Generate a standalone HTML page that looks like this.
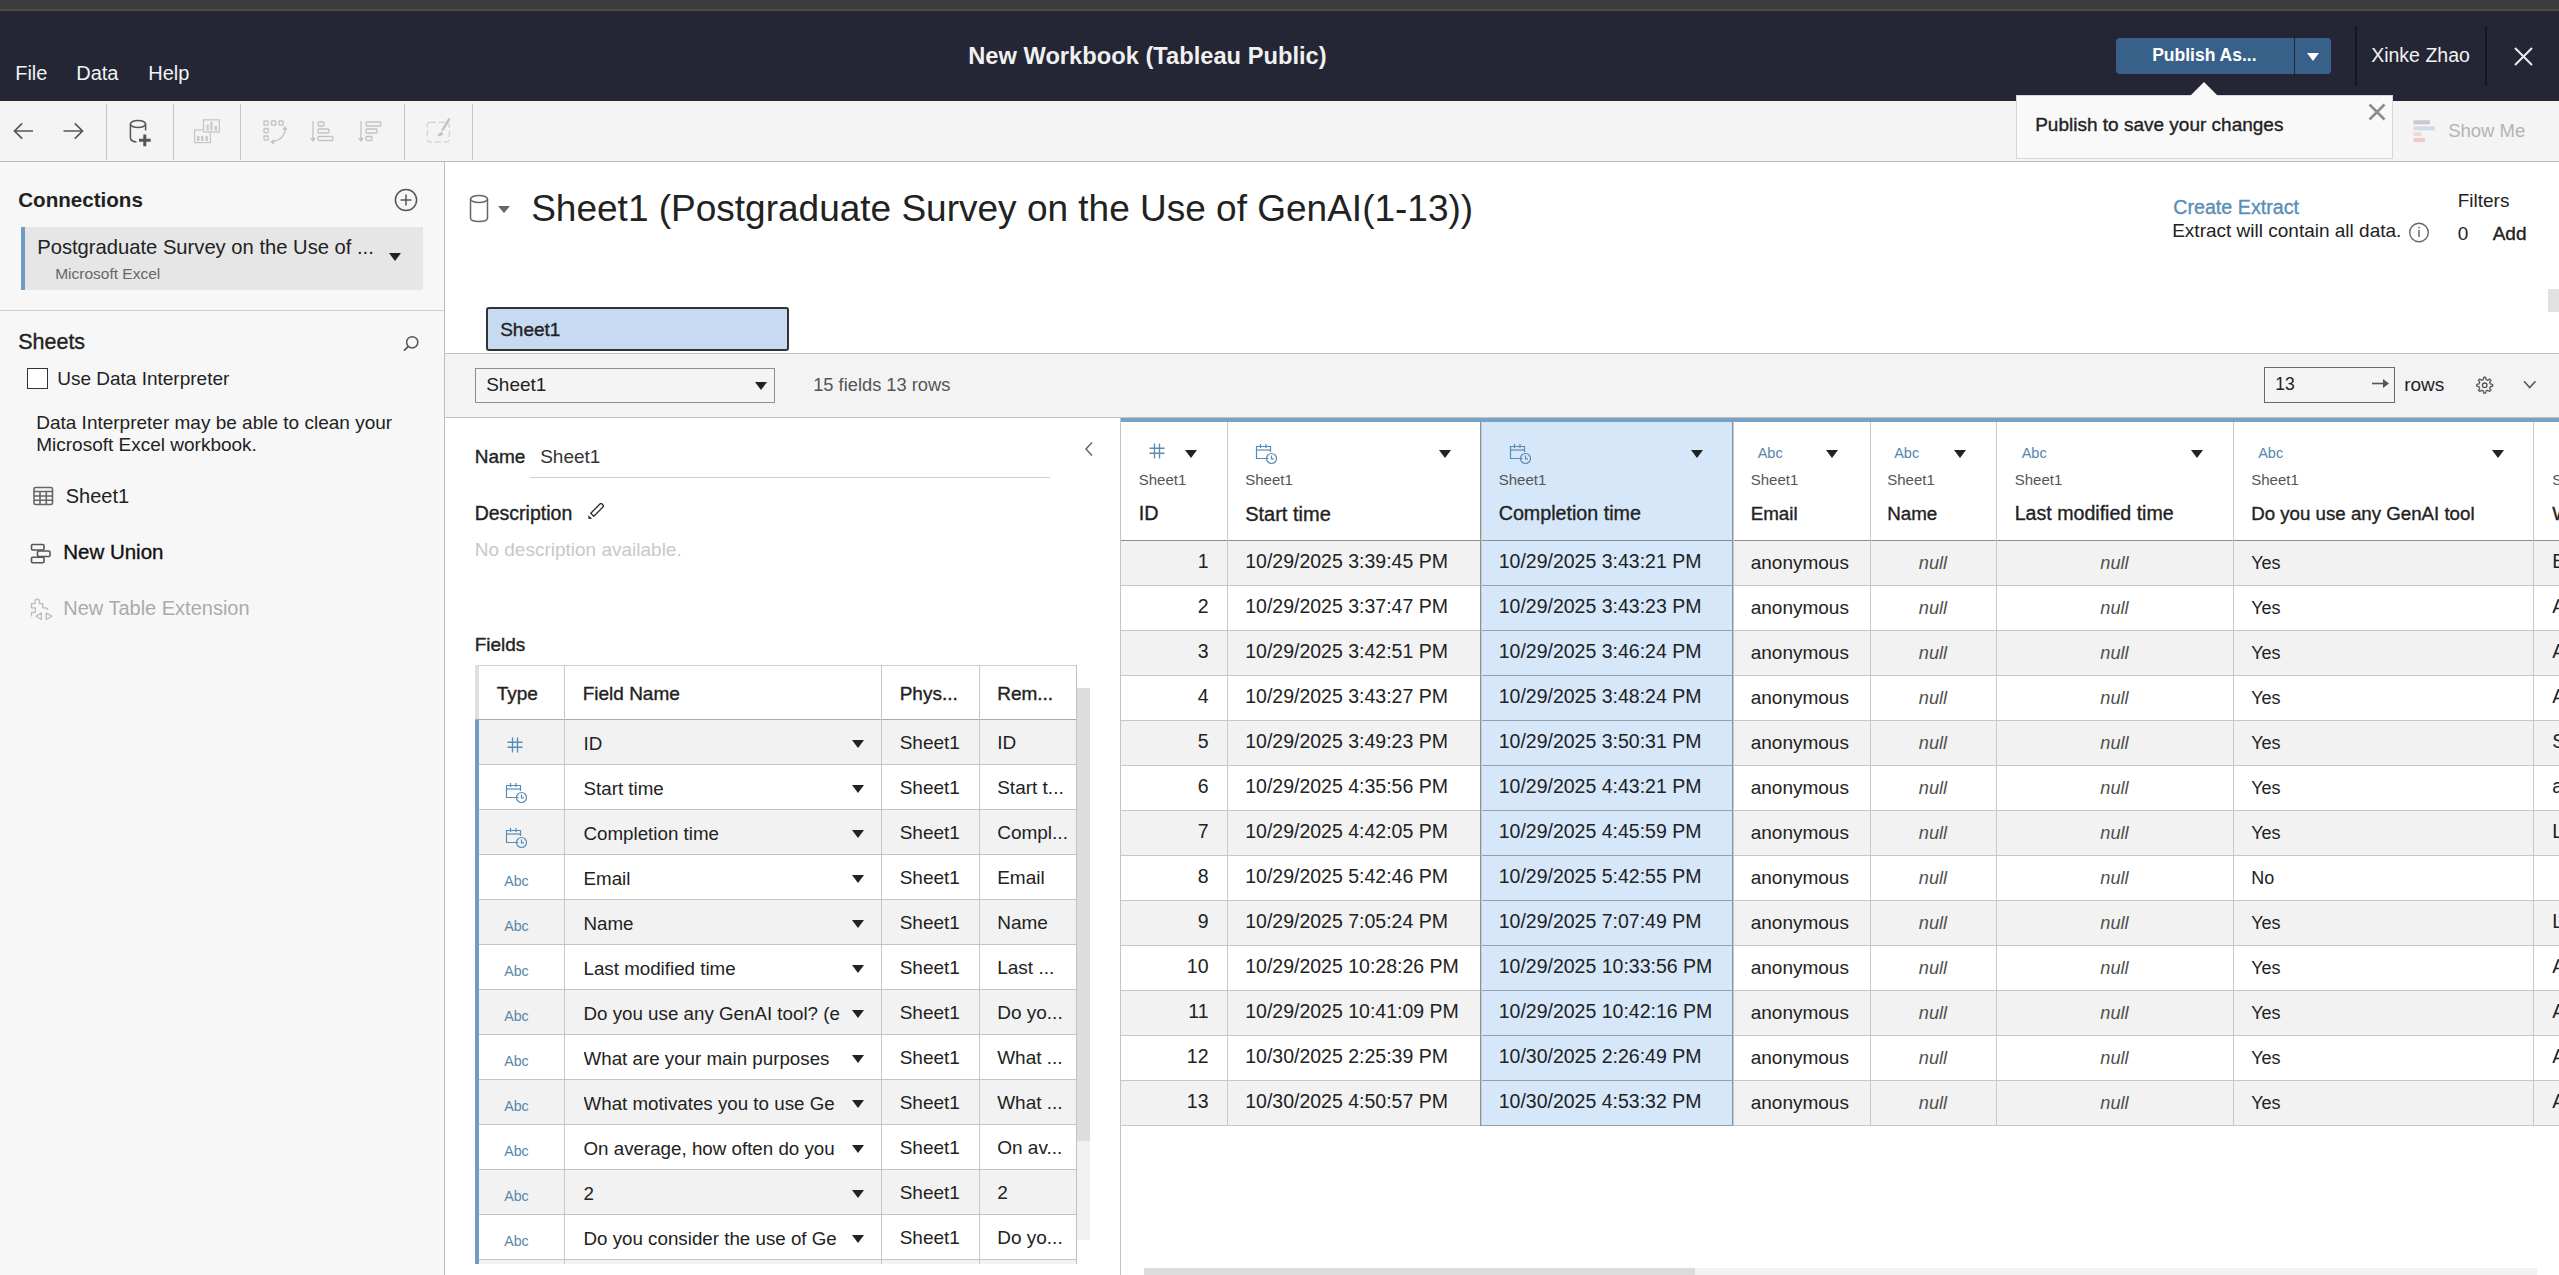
<!DOCTYPE html>
<html><head><meta charset="utf-8"><title>Tableau Public</title>
<style>
html,body{margin:0;padding:0;}
body{width:2559px;height:1275px;overflow:hidden;position:relative;background:#ffffff;font-family:"Liberation Sans", sans-serif;}
.t{position:absolute;white-space:nowrap;line-height:1;}
.r{position:absolute;}
.s{position:absolute;overflow:visible;}
</style></head><body>
<div class="r" style="left:0px;top:0px;width:2559px;height:11px;background:#3c3c3c;"></div>
<div class="r" style="left:0px;top:9px;width:2559px;height:2px;background:#4b4b4b;"></div>
<div class="r" style="left:0px;top:11px;width:2559px;height:90px;background:#242535;"></div>
<div class="t " style="left:15.2px;top:63.1px;font-size:20px;color:#f2f2f2;">File</div>
<div class="t " style="left:76.2px;top:63.1px;font-size:20px;color:#f2f2f2;">Data</div>
<div class="t " style="left:148.2px;top:63.1px;font-size:20px;color:#f2f2f2;">Help</div>
<div class="t " style="left:968.2px;top:44.9px;font-size:23.7px;color:#f0f0f0;font-weight:700;">New Workbook (Tableau Public)</div>
<div class="r" style="left:2116px;top:38px;width:215px;height:36px;background:#386189;border-radius:4px;"></div>
<div class="r" style="left:2294px;top:36px;width:1px;height:40px;background:#1c2838;"></div>
<div class="t " style="left:2152.2px;top:47.2px;font-size:17.5px;color:#ffffff;font-weight:700;">Publish As...</div>
<svg class="s" style="left:2307px;top:53px;" width="12" height="8" viewBox="0 0 12 8"><path d="M0 0H12L6.0 8Z" fill="#ffffff"/></svg>
<div class="r" style="left:2355px;top:26px;width:2px;height:60px;background:#15161e;"></div>
<div class="r" style="left:2485px;top:26px;width:2px;height:60px;background:#15161e;"></div>
<div class="t " style="left:2371.2px;top:46.2px;font-size:19.5px;color:#f2f2f2;">Xinke Zhao</div>
<svg class="s" style="left:2513px;top:46px;" width="21" height="21" viewBox="0 0 21 21"><path d="M2 2L19 19M19 2L2 19" stroke="#eeeeee" stroke-width="2"/></svg>
<div class="r" style="left:0px;top:101px;width:2559px;height:60px;background:#f4f4f4;"></div>
<div class="r" style="left:0px;top:161px;width:2559px;height:1px;background:#bababa;"></div>
<div class="r" style="left:106px;top:104px;width:1px;height:56px;background:#c6c6c6;"></div>
<div class="r" style="left:173px;top:104px;width:1px;height:56px;background:#c6c6c6;"></div>
<div class="r" style="left:240px;top:104px;width:1px;height:56px;background:#c6c6c6;"></div>
<div class="r" style="left:404px;top:104px;width:1px;height:56px;background:#c6c6c6;"></div>
<div class="r" style="left:472px;top:104px;width:1px;height:56px;background:#c6c6c6;"></div>
<svg class="s" style="left:12px;top:121px;" width="24" height="20" viewBox="0 0 24 20"><path d="M21 10H2.5M10.2 2.3L2.5 10L10.2 17.7" stroke="#555" stroke-width="1.7" fill="none"/></svg>
<svg class="s" style="left:61px;top:121px;" width="24" height="20" viewBox="0 0 24 20"><path d="M2.5 10H21M13.8 2.3L21.5 10L13.8 17.7" stroke="#555" stroke-width="1.7" fill="none"/></svg>
<svg class="s" style="left:128px;top:118px;" width="26" height="30" viewBox="0 0 26 30"><ellipse cx="10" cy="6" rx="7.6" ry="3.6" stroke="#555" stroke-width="1.5" fill="none"/><path d="M2.4 6V19.5Q2.4 23.5 8.5 24M17.6 6V12.5" stroke="#555" stroke-width="1.5" fill="none"/><path d="M16.8 16.5V28.2M11 22.3H22.7" stroke="#555" stroke-width="3"/></svg>
<svg class="s" style="left:190px;top:115px;" width="34" height="32" viewBox="0 0 34 32"><g stroke="#c6c6c6" stroke-width="1.3" fill="none"><rect x="13.5" y="4.8" width="15.8" height="12.2"/><path d="M12.9 14.9H4.6V27.7H20.4V17.6"/></g><g fill="#c9c9c9"><rect x="16.5" y="9.5" width="2.3" height="6"/><rect x="20.4" y="6.5" width="2.1" height="9"/><rect x="24.5" y="11" width="2.5" height="4.6"/><rect x="7" y="21" width="2.5" height="5"/><rect x="11" y="21" width="2.5" height="5"/><rect x="15.5" y="21" width="2.5" height="5"/></g></svg>
<svg class="s" style="left:261px;top:118px;" width="30" height="28" viewBox="0 0 30 28"><g stroke="#c2c2c2" stroke-width="1.3" fill="none"><rect x="3" y="3" width="4.2" height="4.2" rx="0.8"/><rect x="10.5" y="3" width="4.2" height="4.2" rx="0.8"/><rect x="18" y="3" width="4.2" height="4.2" rx="0.8"/><rect x="3" y="10.5" width="4.2" height="4.2" rx="0.8"/><rect x="3" y="18" width="4.2" height="4.2" rx="0.8"/><path d="M24 11Q24 21 11 24"/></g><path d="M21.5 12L24 8L26.5 12ZM13 21.5L9 24L13 26.5Z" fill="#c2c2c2"/></svg>
<svg class="s" style="left:308px;top:119px;" width="30" height="26" viewBox="0 0 30 26"><g stroke="#c2c2c2" stroke-width="1.3" fill="none"><path d="M5 2V22"/><rect x="10" y="3" width="6" height="4" rx="1"/><rect x="10" y="10" width="11" height="4" rx="1"/><rect x="10" y="17.5" width="15" height="4" rx="1"/></g><path d="M2 19L5 23L8 19Z" fill="#c2c2c2"/></svg>
<svg class="s" style="left:356px;top:119px;" width="30" height="26" viewBox="0 0 30 26"><g stroke="#c2c2c2" stroke-width="1.3" fill="none"><path d="M5 2V22"/><rect x="10" y="3" width="15" height="4" rx="1"/><rect x="10" y="10" width="11" height="4" rx="1"/><rect x="10" y="17.5" width="6" height="4" rx="1"/></g><path d="M2 19L5 23L8 19Z" fill="#c2c2c2"/></svg>
<svg class="s" style="left:423px;top:115px;" width="30" height="30" viewBox="0 0 30 30"><rect x="4.3" y="7.3" width="22" height="19.5" rx="2.5" stroke="#d2d2d2" stroke-width="1.3" stroke-dasharray="6 3" fill="none"/><path d="M26 4.3L19.6 14.8" stroke="#c2c2c2" stroke-width="2.4" stroke-linecap="round"/><path d="M14.3 20.9Q15.6 17.6 18.8 16.8L20.3 18.4Q19.4 21.3 14.3 20.9Z" fill="#c2c2c2"/></svg>
<div class="r" style="left:2016px;top:95px;width:377px;height:64px;background:#f9f9f9;border:1px solid #d6d6d6;box-sizing:border-box;"></div>
<svg class="s" style="left:2189px;top:81px;" width="30" height="16" viewBox="0 0 30 16"><path d="M1 15L15 1L29 15" fill="#f9f9f9"/></svg>
<div class="t " style="left:2035.2px;top:114.6px;font-size:19px;color:#222;-webkit-text-stroke:0.35px #222;">Publish to save your changes</div>
<svg class="s" style="left:2367px;top:102px;" width="20" height="20" viewBox="0 0 20 20"><path d="M2.5 2.5L17.5 17.5M17.5 2.5L2.5 17.5" stroke="#8c8c8c" stroke-width="2.6"/></svg>
<svg class="s" style="left:2411px;top:118px;" width="26" height="26" viewBox="0 0 26 26"><rect x="2.5" y="2.3" width="16.5" height="4" fill="#ccc6d4"/><rect x="2.5" y="8.3" width="21.5" height="4" fill="#d0dbe6"/><rect x="2.5" y="14.2" width="7.8" height="4" fill="#efdbc6"/><rect x="2.5" y="20" width="11.5" height="4" fill="#eecacd"/></svg>
<div class="t " style="left:2448.2px;top:122.3px;font-size:18.5px;color:#b3b3b3;">Show Me</div>
<div class="r" style="left:0px;top:162px;width:444px;height:1113px;background:#f7f7f7;"></div>
<div class="r" style="left:444px;top:162px;width:1px;height:1113px;background:#bcbcbc;"></div>
<div class="t " style="left:18.2px;top:189.6px;font-size:20.6px;color:#222;font-weight:700;">Connections</div>
<svg class="s" style="left:394px;top:188px;" width="24" height="24" viewBox="0 0 24 24"><circle cx="12" cy="12" r="10.6" stroke="#555" stroke-width="1.5" fill="none"/><path d="M12 6.5V17.5M6.5 12H17.5" stroke="#555" stroke-width="1.5"/></svg>
<div class="r" style="left:21px;top:227px;width:402px;height:63px;background:#e6e6e6;"></div>
<div class="r" style="left:21px;top:227px;width:4px;height:63px;background:#6e9cc4;"></div>
<div class="t " style="left:37.2px;top:236.9px;font-size:20.2px;color:#222;">Postgraduate Survey on the Use of ...</div>
<svg class="s" style="left:389px;top:253px;" width="12" height="8" viewBox="0 0 12 8"><path d="M0 0H12L6.0 8Z" fill="#222"/></svg>
<div class="t " style="left:55.2px;top:266.4px;font-size:15.5px;color:#666;">Microsoft Excel</div>
<div class="r" style="left:0px;top:310px;width:444px;height:1px;background:#cfcfcf;"></div>
<div class="t " style="left:18.2px;top:331.8px;font-size:21.5px;color:#222;-webkit-text-stroke:0.35px #222;">Sheets</div>
<svg class="s" style="left:400px;top:333px;" width="22" height="22" viewBox="0 0 22 22"><circle cx="12.2" cy="9.3" r="5.6" stroke="#555" stroke-width="1.5" fill="none"/><path d="M8.3 13.3L4 17.6" stroke="#555" stroke-width="1.8"/></svg>
<div class="r" style="left:27px;top:368px;width:21px;height:21px;background:#ffffff;border:1.5px solid #333;box-sizing:border-box;"></div>
<div class="t " style="left:57.2px;top:369.2px;font-size:19px;color:#222;">Use Data Interpreter</div>
<div class="t " style="left:36.2px;top:413.2px;font-size:19px;color:#222;">Data Interpreter may be able to clean your</div>
<div class="t " style="left:36.2px;top:435.2px;font-size:19px;color:#222;">Microsoft Excel workbook.</div>
<svg class="s" style="left:32px;top:485px;" width="22" height="22" viewBox="0 0 22 22"><rect x="2" y="2.5" width="18.5" height="17" rx="1.5" stroke="#666" stroke-width="1.6" fill="none"/><path d="M2 6.5H20.5M2 11H20.5M2 15.3H20.5M8 6.5V19.5M14.3 6.5V19.5" stroke="#666" stroke-width="1.6"/></svg>
<div class="t " style="left:65.7px;top:485.8px;font-size:20px;color:#222;">Sheet1</div>
<svg class="s" style="left:29px;top:542px;" width="24" height="23" viewBox="0 0 24 23"><g stroke="#555" stroke-width="1.6" fill="none"><rect x="2.5" y="2.5" width="12.5" height="5.5" rx="1.2"/><rect x="8.5" y="9" width="12.5" height="5.5" rx="1.2"/><rect x="2.5" y="15.2" width="12.5" height="5.5" rx="1.2"/></g></svg>
<div class="t " style="left:63.2px;top:541.8px;font-size:20.5px;color:#111;-webkit-text-stroke:0.35px #111;">New Union</div>
<svg class="s" style="left:29px;top:597px;" width="26" height="26" viewBox="0 0 26 26"><g stroke="#bcbcbc" stroke-width="1.3" fill="none" stroke-linejoin="round"><path d="M2.5 19.5V15.3H6.3V10.8H2.5V6.6H6V4.3Q6 2.2 8.2 2.2Q10.4 2.2 10.4 4.3V6.6H13.7V10.8H16Q18.6 10.8 18.6 13"/><path d="M12.4 16V22.5L7 19.2Z"/><path d="M17.2 16V22.5L22.8 19.2Z"/></g></svg>
<div class="t " style="left:63.2px;top:598.3px;font-size:20px;color:#aaaaaa;">New Table Extension</div>
<svg class="s" style="left:468px;top:193px;" width="24" height="32" viewBox="0 0 24 32"><ellipse cx="11" cy="6" rx="8.5" ry="3.6" stroke="#666" stroke-width="1.5" fill="none"/><path d="M2.5 6V25Q2.5 28.5 11 28.5Q19.5 28.5 19.5 25V6" stroke="#666" stroke-width="1.5" fill="none"/></svg>
<svg class="s" style="left:498px;top:206px;" width="12" height="7" viewBox="0 0 12 7"><path d="M0 0H12L6.0 7Z" fill="#666"/></svg>
<div class="t " style="left:531.2px;top:189.7px;font-size:37px;color:#222;">Sheet1 (Postgraduate Survey on the Use of GenAI(1-13))</div>
<div class="t " style="left:2173.2px;top:197.7px;font-size:19.7px;color:#5a8db5;-webkit-text-stroke:0.35px #5a8db5;">Create Extract</div>
<div class="t " style="left:2172.2px;top:221.4px;font-size:19px;color:#222;">Extract will contain all data.</div>
<svg class="s" style="left:2408px;top:221px;" width="22" height="22" viewBox="0 0 22 22"><circle cx="11" cy="11.5" r="9.3" stroke="#666" stroke-width="1.4" fill="none"/><path d="M11 9V16" stroke="#666" stroke-width="1.5"/><circle cx="11" cy="6.6" r="0.9" fill="#666"/></svg>
<div class="t " style="left:2457.7px;top:191.1px;font-size:19px;color:#222;">Filters</div>
<div class="t " style="left:2457.7px;top:224.3px;font-size:19px;color:#222;">0</div>
<div class="t " style="left:2492.7px;top:224.3px;font-size:19px;color:#222;-webkit-text-stroke:0.35px #222;">Add</div>
<div class="r" style="left:2548px;top:289px;width:11px;height:23px;background:#e2e2e2;"></div>
<div class="r" style="left:486px;top:307px;width:303px;height:44px;background:#c6dbf1;border:2px solid #333;border-radius:3px;box-sizing:border-box;"></div>
<div class="t " style="left:500.2px;top:319.9px;font-size:19px;color:#222;-webkit-text-stroke:0.35px #222;">Sheet1</div>
<div class="r" style="left:445px;top:353px;width:2114px;height:1px;background:#c3c3c3;"></div>
<div class="r" style="left:445px;top:354px;width:2114px;height:63px;background:#f3f3f3;"></div>
<div class="r" style="left:445px;top:417px;width:2114px;height:1px;background:#c3c3c3;"></div>
<div class="r" style="left:475px;top:368px;width:300px;height:35px;background:#f4f4f4;border:1px solid #8f8f8f;box-sizing:border-box;"></div>
<div class="t " style="left:486.2px;top:375.2px;font-size:19px;color:#222;">Sheet1</div>
<svg class="s" style="left:755px;top:382px;" width="12" height="8" viewBox="0 0 12 8"><path d="M0 0H12L6.0 8Z" fill="#222"/></svg>
<div class="t " style="left:813.2px;top:375.8px;font-size:18.3px;color:#555;">15 fields 13 rows</div>
<div class="r" style="left:2264px;top:367px;width:131px;height:36px;background:#f4f4f4;border:1.5px solid #6a6a6a;box-sizing:border-box;"></div>
<div class="t " style="left:2275.2px;top:376.0px;font-size:17.5px;color:#222;">13</div>
<svg class="s" style="left:2371px;top:376px;" width="20" height="14" viewBox="0 0 20 14"><path d="M1 7.5H16" stroke="#555" stroke-width="1.6"/><path d="M12 3L18 7.5L12 12Z" fill="#555"/></svg>
<div class="t " style="left:2404.2px;top:374.7px;font-size:19px;color:#222;">rows</div>
<svg class="s" style="left:2473px;top:374px;" width="22" height="22" viewBox="0 0 22 22"><path d="M11 3.2L12.6 3.4L13.1 5.6L14.7 6.3L16.6 5.1L17.9 6.4L16.7 8.3L17.4 9.9L19.6 10.4V12.2L17.4 12.7L16.7 14.3L17.9 16.2L16.6 17.5L14.7 16.3L13.1 17L12.6 19.2H10.8L10.3 17L8.7 16.3L6.8 17.5L5.5 16.2L6.7 14.3L6 12.7L3.8 12.2V10.4L6 9.9L6.7 8.3L5.5 6.4L6.8 5.1L8.7 6.3L10.3 5.6L10.8 3.4Z" stroke="#555" stroke-width="1.3" fill="none"/><circle cx="11.7" cy="11.3" r="2.3" stroke="#555" stroke-width="1.3" fill="none"/></svg>
<svg class="s" style="left:2521px;top:378px;" width="18" height="14" viewBox="0 0 18 14"><path d="M3 3.3L8.7 9.6L14.5 3.3" stroke="#555" stroke-width="1.5" fill="none"/></svg>
<div class="t " style="left:474.7px;top:447.4px;font-size:19px;color:#222;-webkit-text-stroke:0.35px #222;">Name</div>
<div class="t " style="left:540.2px;top:447.4px;font-size:19px;color:#333;">Sheet1</div>
<div class="r" style="left:530px;top:477px;width:520px;height:1px;background:#cfcfcf;"></div>
<svg class="s" style="left:1082px;top:440px;" width="14" height="18" viewBox="0 0 14 18"><path d="M10 2.5L4 9L10 15.5" stroke="#666" stroke-width="1.5" fill="none"/></svg>
<div class="t " style="left:474.7px;top:504.3px;font-size:19.5px;color:#222;-webkit-text-stroke:0.35px #222;">Description</div>
<svg class="s" style="left:585px;top:501px;" width="22" height="20" viewBox="0 0 22 20"><path d="M5.8 12.2L15.2 2.8Q16 2.2 16.8 2.8L18.2 4.2Q18.8 5 18.2 5.8L8.8 15.2Z" stroke="#2a2a2a" stroke-width="1.3" fill="none" stroke-linejoin="round"/><path d="M3.3 14.3L3.5 18L7.2 17.7Z" fill="#2a2a2a"/></svg>
<div class="t " style="left:474.7px;top:539.9px;font-size:19px;color:#c8c8c8;">No description available.</div>
<div class="t " style="left:474.7px;top:635.1px;font-size:19px;color:#222;-webkit-text-stroke:0.35px #222;">Fields</div>
<div class="r" style="left:475px;top:665px;width:602px;height:54px;background:#ffffff;"></div>
<div class="r" style="left:475px;top:665px;width:602px;height:1px;background:#d0d0d0;"></div>
<div class="r" style="left:475px;top:665px;width:4px;height:54px;background:#e0e0e0;"></div>
<div class="r" style="left:475px;top:719px;width:602px;height:1px;background:#a9a9a9;"></div>
<div class="t " style="left:496.7px;top:684.4px;font-size:19px;color:#222;-webkit-text-stroke:0.35px #222;">Type</div>
<div class="t " style="left:582.7px;top:684.4px;font-size:19px;color:#222;-webkit-text-stroke:0.35px #222;">Field Name</div>
<div class="t " style="left:899.7px;top:684.4px;font-size:19px;color:#222;-webkit-text-stroke:0.35px #222;">Phys...</div>
<div class="t " style="left:997.2px;top:684.4px;font-size:19px;color:#222;-webkit-text-stroke:0.35px #222;">Rem...</div>
<div class="r" style="left:475px;top:720px;width:602px;height:44px;background:#f2f2f2;"></div>
<div class="r" style="left:475px;top:720px;width:4px;height:45px;background:#6e9cc4;"></div>
<div class="r" style="left:479px;top:764px;width:598px;height:1px;background:#c4c4c4;"></div>
<svg class="s" style="left:506px;top:735.5px;" width="18" height="18" viewBox="0 0 18 18"><path d="M6.5 1.5V16.5M11.5 1.5V16.5M1.5 6.2H16.5M1.5 11.2H16.5" stroke="#5a8cb3" stroke-width="1.35"/></svg>
<div class="t" style="left:583.5px;top:735.0px;font-size:18.75px;color:#222;width:256px;overflow:hidden">ID</div>
<svg class="s" style="left:852px;top:740px;" width="12" height="8" viewBox="0 0 12 8"><path d="M0 0H12L6.0 8Z" fill="#222"/></svg>
<div class="t " style="left:899.7px;top:732.9px;font-size:19px;color:#222;">Sheet1</div>
<div class="t " style="left:997.2px;top:732.9px;font-size:19px;color:#222;">ID</div>
<div class="r" style="left:475px;top:765px;width:602px;height:44px;background:#ffffff;"></div>
<div class="r" style="left:475px;top:765px;width:4px;height:45px;background:#6e9cc4;"></div>
<div class="r" style="left:479px;top:809px;width:598px;height:1px;background:#c4c4c4;"></div>
<svg class="s" style="left:505px;top:782px;" width="24" height="22" viewBox="0 0 24 22"><g stroke="#5a8cb3" stroke-width="1.2" fill="none"><path d="M13.5 15.5H1.5V3.5H15.5V9"/><path d="M1.5 7H15.5"/><path d="M5.5 1V5M11 1V5"/><circle cx="16.5" cy="15.5" r="5"/><path d="M16.5 12.5V15.8H19"/></g></svg>
<div class="t" style="left:583.5px;top:780.0px;font-size:18.75px;color:#222;width:256px;overflow:hidden">Start time</div>
<svg class="s" style="left:852px;top:785px;" width="12" height="8" viewBox="0 0 12 8"><path d="M0 0H12L6.0 8Z" fill="#222"/></svg>
<div class="t " style="left:899.7px;top:777.9px;font-size:19px;color:#222;">Sheet1</div>
<div class="t " style="left:997.2px;top:777.9px;font-size:19px;color:#222;">Start t...</div>
<div class="r" style="left:475px;top:810px;width:602px;height:44px;background:#f2f2f2;"></div>
<div class="r" style="left:475px;top:810px;width:4px;height:45px;background:#6e9cc4;"></div>
<div class="r" style="left:479px;top:854px;width:598px;height:1px;background:#c4c4c4;"></div>
<svg class="s" style="left:505px;top:827px;" width="24" height="22" viewBox="0 0 24 22"><g stroke="#5a8cb3" stroke-width="1.2" fill="none"><path d="M13.5 15.5H1.5V3.5H15.5V9"/><path d="M1.5 7H15.5"/><path d="M5.5 1V5M11 1V5"/><circle cx="16.5" cy="15.5" r="5"/><path d="M16.5 12.5V15.8H19"/></g></svg>
<div class="t" style="left:583.5px;top:825.0px;font-size:18.75px;color:#222;width:256px;overflow:hidden">Completion time</div>
<svg class="s" style="left:852px;top:830px;" width="12" height="8" viewBox="0 0 12 8"><path d="M0 0H12L6.0 8Z" fill="#222"/></svg>
<div class="t " style="left:899.7px;top:822.9px;font-size:19px;color:#222;">Sheet1</div>
<div class="t " style="left:997.2px;top:822.9px;font-size:19px;color:#222;">Compl...</div>
<div class="r" style="left:475px;top:855px;width:602px;height:44px;background:#ffffff;"></div>
<div class="r" style="left:475px;top:855px;width:4px;height:45px;background:#6e9cc4;"></div>
<div class="r" style="left:479px;top:899px;width:598px;height:1px;background:#c4c4c4;"></div>
<div class="t " style="left:504.2px;top:874.0px;font-size:14.2px;color:#5586ab;">Abc</div>
<div class="t" style="left:583.5px;top:870.0px;font-size:18.75px;color:#222;width:256px;overflow:hidden">Email</div>
<svg class="s" style="left:852px;top:875px;" width="12" height="8" viewBox="0 0 12 8"><path d="M0 0H12L6.0 8Z" fill="#222"/></svg>
<div class="t " style="left:899.7px;top:867.9px;font-size:19px;color:#222;">Sheet1</div>
<div class="t " style="left:997.2px;top:867.9px;font-size:19px;color:#222;">Email</div>
<div class="r" style="left:475px;top:900px;width:602px;height:44px;background:#f2f2f2;"></div>
<div class="r" style="left:475px;top:900px;width:4px;height:45px;background:#6e9cc4;"></div>
<div class="r" style="left:479px;top:944px;width:598px;height:1px;background:#c4c4c4;"></div>
<div class="t " style="left:504.2px;top:919.0px;font-size:14.2px;color:#5586ab;">Abc</div>
<div class="t" style="left:583.5px;top:915.0px;font-size:18.75px;color:#222;width:256px;overflow:hidden">Name</div>
<svg class="s" style="left:852px;top:920px;" width="12" height="8" viewBox="0 0 12 8"><path d="M0 0H12L6.0 8Z" fill="#222"/></svg>
<div class="t " style="left:899.7px;top:912.9px;font-size:19px;color:#222;">Sheet1</div>
<div class="t " style="left:997.2px;top:912.9px;font-size:19px;color:#222;">Name</div>
<div class="r" style="left:475px;top:945px;width:602px;height:44px;background:#ffffff;"></div>
<div class="r" style="left:475px;top:945px;width:4px;height:45px;background:#6e9cc4;"></div>
<div class="r" style="left:479px;top:989px;width:598px;height:1px;background:#c4c4c4;"></div>
<div class="t " style="left:504.2px;top:964.0px;font-size:14.2px;color:#5586ab;">Abc</div>
<div class="t" style="left:583.5px;top:960.0px;font-size:18.75px;color:#222;width:256px;overflow:hidden">Last modified time</div>
<svg class="s" style="left:852px;top:965px;" width="12" height="8" viewBox="0 0 12 8"><path d="M0 0H12L6.0 8Z" fill="#222"/></svg>
<div class="t " style="left:899.7px;top:957.9px;font-size:19px;color:#222;">Sheet1</div>
<div class="t " style="left:997.2px;top:957.9px;font-size:19px;color:#222;">Last ...</div>
<div class="r" style="left:475px;top:990px;width:602px;height:44px;background:#f2f2f2;"></div>
<div class="r" style="left:475px;top:990px;width:4px;height:45px;background:#6e9cc4;"></div>
<div class="r" style="left:479px;top:1034px;width:598px;height:1px;background:#c4c4c4;"></div>
<div class="t " style="left:504.2px;top:1009.0px;font-size:14.2px;color:#5586ab;">Abc</div>
<div class="t" style="left:583.5px;top:1005.0px;font-size:18.75px;color:#222;width:256px;overflow:hidden">Do you use any GenAI tool? (e</div>
<svg class="s" style="left:852px;top:1010px;" width="12" height="8" viewBox="0 0 12 8"><path d="M0 0H12L6.0 8Z" fill="#222"/></svg>
<div class="t " style="left:899.7px;top:1002.9px;font-size:19px;color:#222;">Sheet1</div>
<div class="t " style="left:997.2px;top:1002.9px;font-size:19px;color:#222;">Do yo...</div>
<div class="r" style="left:475px;top:1035px;width:602px;height:44px;background:#ffffff;"></div>
<div class="r" style="left:475px;top:1035px;width:4px;height:45px;background:#6e9cc4;"></div>
<div class="r" style="left:479px;top:1079px;width:598px;height:1px;background:#c4c4c4;"></div>
<div class="t " style="left:504.2px;top:1054.0px;font-size:14.2px;color:#5586ab;">Abc</div>
<div class="t" style="left:583.5px;top:1050.0px;font-size:18.75px;color:#222;width:256px;overflow:hidden">What are your main purposes</div>
<svg class="s" style="left:852px;top:1055px;" width="12" height="8" viewBox="0 0 12 8"><path d="M0 0H12L6.0 8Z" fill="#222"/></svg>
<div class="t " style="left:899.7px;top:1047.9px;font-size:19px;color:#222;">Sheet1</div>
<div class="t " style="left:997.2px;top:1047.9px;font-size:19px;color:#222;">What ...</div>
<div class="r" style="left:475px;top:1080px;width:602px;height:44px;background:#f2f2f2;"></div>
<div class="r" style="left:475px;top:1080px;width:4px;height:45px;background:#6e9cc4;"></div>
<div class="r" style="left:479px;top:1124px;width:598px;height:1px;background:#c4c4c4;"></div>
<div class="t " style="left:504.2px;top:1099.0px;font-size:14.2px;color:#5586ab;">Abc</div>
<div class="t" style="left:583.5px;top:1095.0px;font-size:18.75px;color:#222;width:256px;overflow:hidden">What motivates you to use Ge</div>
<svg class="s" style="left:852px;top:1100px;" width="12" height="8" viewBox="0 0 12 8"><path d="M0 0H12L6.0 8Z" fill="#222"/></svg>
<div class="t " style="left:899.7px;top:1092.9px;font-size:19px;color:#222;">Sheet1</div>
<div class="t " style="left:997.2px;top:1092.9px;font-size:19px;color:#222;">What ...</div>
<div class="r" style="left:475px;top:1125px;width:602px;height:44px;background:#ffffff;"></div>
<div class="r" style="left:475px;top:1125px;width:4px;height:45px;background:#6e9cc4;"></div>
<div class="r" style="left:479px;top:1169px;width:598px;height:1px;background:#c4c4c4;"></div>
<div class="t " style="left:504.2px;top:1144.0px;font-size:14.2px;color:#5586ab;">Abc</div>
<div class="t" style="left:583.5px;top:1140.0px;font-size:18.75px;color:#222;width:256px;overflow:hidden">On average, how often do you</div>
<svg class="s" style="left:852px;top:1145px;" width="12" height="8" viewBox="0 0 12 8"><path d="M0 0H12L6.0 8Z" fill="#222"/></svg>
<div class="t " style="left:899.7px;top:1137.9px;font-size:19px;color:#222;">Sheet1</div>
<div class="t " style="left:997.2px;top:1137.9px;font-size:19px;color:#222;">On av...</div>
<div class="r" style="left:475px;top:1170px;width:602px;height:44px;background:#f2f2f2;"></div>
<div class="r" style="left:475px;top:1170px;width:4px;height:45px;background:#6e9cc4;"></div>
<div class="r" style="left:479px;top:1214px;width:598px;height:1px;background:#c4c4c4;"></div>
<div class="t " style="left:504.2px;top:1189.0px;font-size:14.2px;color:#5586ab;">Abc</div>
<div class="t" style="left:583.5px;top:1185.0px;font-size:18.75px;color:#222;width:256px;overflow:hidden">2</div>
<svg class="s" style="left:852px;top:1190px;" width="12" height="8" viewBox="0 0 12 8"><path d="M0 0H12L6.0 8Z" fill="#222"/></svg>
<div class="t " style="left:899.7px;top:1182.9px;font-size:19px;color:#222;">Sheet1</div>
<div class="t " style="left:997.2px;top:1182.9px;font-size:19px;color:#222;">2</div>
<div class="r" style="left:475px;top:1215px;width:602px;height:44px;background:#ffffff;"></div>
<div class="r" style="left:475px;top:1215px;width:4px;height:45px;background:#6e9cc4;"></div>
<div class="r" style="left:479px;top:1259px;width:598px;height:1px;background:#c4c4c4;"></div>
<div class="t " style="left:504.2px;top:1234.0px;font-size:14.2px;color:#5586ab;">Abc</div>
<div class="t" style="left:583.5px;top:1230.0px;font-size:18.75px;color:#222;width:256px;overflow:hidden">Do you consider the use of Ge</div>
<svg class="s" style="left:852px;top:1235px;" width="12" height="8" viewBox="0 0 12 8"><path d="M0 0H12L6.0 8Z" fill="#222"/></svg>
<div class="t " style="left:899.7px;top:1227.9px;font-size:19px;color:#222;">Sheet1</div>
<div class="t " style="left:997.2px;top:1227.9px;font-size:19px;color:#222;">Do yo...</div>
<div class="r" style="left:475px;top:1260px;width:602px;height:4px;background:#f2f2f2;"></div>
<div class="r" style="left:475px;top:1260px;width:4px;height:4px;background:#6e9cc4;"></div>
<div class="r" style="left:564px;top:665px;width:1px;height:599px;background:#c6c6c6;"></div>
<div class="r" style="left:881px;top:665px;width:1px;height:599px;background:#c6c6c6;"></div>
<div class="r" style="left:979px;top:665px;width:1px;height:599px;background:#c6c6c6;"></div>
<div class="r" style="left:1076px;top:665px;width:1px;height:599px;background:#c2c2c2;"></div>
<div class="r" style="left:1077px;top:688px;width:13px;height:453px;background:#dddddd;"></div>
<div class="r" style="left:1077px;top:1141px;width:13px;height:99px;background:#f1f1f1;"></div>
<div class="r" style="left:1120px;top:418px;width:1px;height:857px;background:#c4c4c4;"></div>
<div class="r" style="left:1121px;top:418px;width:1438px;height:4px;background:#77a2c8;"></div>
<div class="r" style="left:1121px;top:422px;width:1438px;height:118px;background:#ffffff;"></div>
<div class="r" style="left:1481px;top:422px;width:252px;height:703px;background:#d6e7fa;"></div>
<div class="r" style="left:1121px;top:540px;width:360px;height:45px;background:#f2f2f2;"></div>
<div class="r" style="left:1733px;top:540px;width:826px;height:45px;background:#f2f2f2;"></div>
<div class="r" style="left:1121px;top:630px;width:360px;height:45px;background:#f2f2f2;"></div>
<div class="r" style="left:1733px;top:630px;width:826px;height:45px;background:#f2f2f2;"></div>
<div class="r" style="left:1121px;top:720px;width:360px;height:45px;background:#f2f2f2;"></div>
<div class="r" style="left:1733px;top:720px;width:826px;height:45px;background:#f2f2f2;"></div>
<div class="r" style="left:1121px;top:810px;width:360px;height:45px;background:#f2f2f2;"></div>
<div class="r" style="left:1733px;top:810px;width:826px;height:45px;background:#f2f2f2;"></div>
<div class="r" style="left:1121px;top:900px;width:360px;height:45px;background:#f2f2f2;"></div>
<div class="r" style="left:1733px;top:900px;width:826px;height:45px;background:#f2f2f2;"></div>
<div class="r" style="left:1121px;top:990px;width:360px;height:45px;background:#f2f2f2;"></div>
<div class="r" style="left:1733px;top:990px;width:826px;height:45px;background:#f2f2f2;"></div>
<div class="r" style="left:1121px;top:1080px;width:360px;height:45px;background:#f2f2f2;"></div>
<div class="r" style="left:1733px;top:1080px;width:826px;height:45px;background:#f2f2f2;"></div>
<div class="r" style="left:1121px;top:585px;width:360px;height:1px;background:#c8c8c8;"></div>
<div class="r" style="left:1481px;top:585px;width:252px;height:1px;background:#94a0ad;"></div>
<div class="r" style="left:1733px;top:585px;width:826px;height:1px;background:#c8c8c8;"></div>
<div class="r" style="left:1121px;top:630px;width:360px;height:1px;background:#c8c8c8;"></div>
<div class="r" style="left:1481px;top:630px;width:252px;height:1px;background:#94a0ad;"></div>
<div class="r" style="left:1733px;top:630px;width:826px;height:1px;background:#c8c8c8;"></div>
<div class="r" style="left:1121px;top:675px;width:360px;height:1px;background:#c8c8c8;"></div>
<div class="r" style="left:1481px;top:675px;width:252px;height:1px;background:#94a0ad;"></div>
<div class="r" style="left:1733px;top:675px;width:826px;height:1px;background:#c8c8c8;"></div>
<div class="r" style="left:1121px;top:720px;width:360px;height:1px;background:#c8c8c8;"></div>
<div class="r" style="left:1481px;top:720px;width:252px;height:1px;background:#94a0ad;"></div>
<div class="r" style="left:1733px;top:720px;width:826px;height:1px;background:#c8c8c8;"></div>
<div class="r" style="left:1121px;top:765px;width:360px;height:1px;background:#c8c8c8;"></div>
<div class="r" style="left:1481px;top:765px;width:252px;height:1px;background:#94a0ad;"></div>
<div class="r" style="left:1733px;top:765px;width:826px;height:1px;background:#c8c8c8;"></div>
<div class="r" style="left:1121px;top:810px;width:360px;height:1px;background:#c8c8c8;"></div>
<div class="r" style="left:1481px;top:810px;width:252px;height:1px;background:#94a0ad;"></div>
<div class="r" style="left:1733px;top:810px;width:826px;height:1px;background:#c8c8c8;"></div>
<div class="r" style="left:1121px;top:855px;width:360px;height:1px;background:#c8c8c8;"></div>
<div class="r" style="left:1481px;top:855px;width:252px;height:1px;background:#94a0ad;"></div>
<div class="r" style="left:1733px;top:855px;width:826px;height:1px;background:#c8c8c8;"></div>
<div class="r" style="left:1121px;top:900px;width:360px;height:1px;background:#c8c8c8;"></div>
<div class="r" style="left:1481px;top:900px;width:252px;height:1px;background:#94a0ad;"></div>
<div class="r" style="left:1733px;top:900px;width:826px;height:1px;background:#c8c8c8;"></div>
<div class="r" style="left:1121px;top:945px;width:360px;height:1px;background:#c8c8c8;"></div>
<div class="r" style="left:1481px;top:945px;width:252px;height:1px;background:#94a0ad;"></div>
<div class="r" style="left:1733px;top:945px;width:826px;height:1px;background:#c8c8c8;"></div>
<div class="r" style="left:1121px;top:990px;width:360px;height:1px;background:#c8c8c8;"></div>
<div class="r" style="left:1481px;top:990px;width:252px;height:1px;background:#94a0ad;"></div>
<div class="r" style="left:1733px;top:990px;width:826px;height:1px;background:#c8c8c8;"></div>
<div class="r" style="left:1121px;top:1035px;width:360px;height:1px;background:#c8c8c8;"></div>
<div class="r" style="left:1481px;top:1035px;width:252px;height:1px;background:#94a0ad;"></div>
<div class="r" style="left:1733px;top:1035px;width:826px;height:1px;background:#c8c8c8;"></div>
<div class="r" style="left:1121px;top:1080px;width:360px;height:1px;background:#c8c8c8;"></div>
<div class="r" style="left:1481px;top:1080px;width:252px;height:1px;background:#94a0ad;"></div>
<div class="r" style="left:1733px;top:1080px;width:826px;height:1px;background:#c8c8c8;"></div>
<div class="r" style="left:1121px;top:1125px;width:360px;height:1px;background:#c8c8c8;"></div>
<div class="r" style="left:1481px;top:1125px;width:252px;height:1px;background:#94a0ad;"></div>
<div class="r" style="left:1733px;top:1125px;width:826px;height:1px;background:#c8c8c8;"></div>
<div class="t" style="left:1100px;width:108.5px;text-align:right;top:552.3px;font-size:19.5px;color:#222">1</div>
<div class="t " style="left:1245.2px;top:552.3px;font-size:19.5px;color:#222;">10/29/2025 3:39:45 PM</div>
<div class="t " style="left:1498.7px;top:552.3px;font-size:19.5px;color:#222;">10/29/2025 3:43:21 PM</div>
<div class="t " style="left:1750.7px;top:552.7px;font-size:19px;color:#222;">anonymous</div>
<div class="t" style="left:1870px;width:126px;text-align:center;top:554.4px;font-size:18.2px;color:#4f4f4f;font-style:italic">null</div>
<div class="t" style="left:1996px;width:237px;text-align:center;top:554.4px;font-size:18.2px;color:#4f4f4f;font-style:italic">null</div>
<div class="t " style="left:2251.2px;top:553.6px;font-size:18px;color:#222;">Yes</div>
<div class="t " style="left:2552.2px;top:552.3px;font-size:19.5px;color:#222;">B</div>
<div class="t" style="left:1100px;width:108.5px;text-align:right;top:597.3px;font-size:19.5px;color:#222">2</div>
<div class="t " style="left:1245.2px;top:597.3px;font-size:19.5px;color:#222;">10/29/2025 3:37:47 PM</div>
<div class="t " style="left:1498.7px;top:597.3px;font-size:19.5px;color:#222;">10/29/2025 3:43:23 PM</div>
<div class="t " style="left:1750.7px;top:597.7px;font-size:19px;color:#222;">anonymous</div>
<div class="t" style="left:1870px;width:126px;text-align:center;top:599.4px;font-size:18.2px;color:#4f4f4f;font-style:italic">null</div>
<div class="t" style="left:1996px;width:237px;text-align:center;top:599.4px;font-size:18.2px;color:#4f4f4f;font-style:italic">null</div>
<div class="t " style="left:2251.2px;top:598.6px;font-size:18px;color:#222;">Yes</div>
<div class="t " style="left:2552.2px;top:597.3px;font-size:19.5px;color:#222;">A</div>
<div class="t" style="left:1100px;width:108.5px;text-align:right;top:642.3px;font-size:19.5px;color:#222">3</div>
<div class="t " style="left:1245.2px;top:642.3px;font-size:19.5px;color:#222;">10/29/2025 3:42:51 PM</div>
<div class="t " style="left:1498.7px;top:642.3px;font-size:19.5px;color:#222;">10/29/2025 3:46:24 PM</div>
<div class="t " style="left:1750.7px;top:642.7px;font-size:19px;color:#222;">anonymous</div>
<div class="t" style="left:1870px;width:126px;text-align:center;top:644.4px;font-size:18.2px;color:#4f4f4f;font-style:italic">null</div>
<div class="t" style="left:1996px;width:237px;text-align:center;top:644.4px;font-size:18.2px;color:#4f4f4f;font-style:italic">null</div>
<div class="t " style="left:2251.2px;top:643.6px;font-size:18px;color:#222;">Yes</div>
<div class="t " style="left:2552.2px;top:642.3px;font-size:19.5px;color:#222;">A</div>
<div class="t" style="left:1100px;width:108.5px;text-align:right;top:687.3px;font-size:19.5px;color:#222">4</div>
<div class="t " style="left:1245.2px;top:687.3px;font-size:19.5px;color:#222;">10/29/2025 3:43:27 PM</div>
<div class="t " style="left:1498.7px;top:687.3px;font-size:19.5px;color:#222;">10/29/2025 3:48:24 PM</div>
<div class="t " style="left:1750.7px;top:687.7px;font-size:19px;color:#222;">anonymous</div>
<div class="t" style="left:1870px;width:126px;text-align:center;top:689.4px;font-size:18.2px;color:#4f4f4f;font-style:italic">null</div>
<div class="t" style="left:1996px;width:237px;text-align:center;top:689.4px;font-size:18.2px;color:#4f4f4f;font-style:italic">null</div>
<div class="t " style="left:2251.2px;top:688.6px;font-size:18px;color:#222;">Yes</div>
<div class="t " style="left:2552.2px;top:687.3px;font-size:19.5px;color:#222;">A</div>
<div class="t" style="left:1100px;width:108.5px;text-align:right;top:732.3px;font-size:19.5px;color:#222">5</div>
<div class="t " style="left:1245.2px;top:732.3px;font-size:19.5px;color:#222;">10/29/2025 3:49:23 PM</div>
<div class="t " style="left:1498.7px;top:732.3px;font-size:19.5px;color:#222;">10/29/2025 3:50:31 PM</div>
<div class="t " style="left:1750.7px;top:732.7px;font-size:19px;color:#222;">anonymous</div>
<div class="t" style="left:1870px;width:126px;text-align:center;top:734.4px;font-size:18.2px;color:#4f4f4f;font-style:italic">null</div>
<div class="t" style="left:1996px;width:237px;text-align:center;top:734.4px;font-size:18.2px;color:#4f4f4f;font-style:italic">null</div>
<div class="t " style="left:2251.2px;top:733.6px;font-size:18px;color:#222;">Yes</div>
<div class="t " style="left:2552.2px;top:732.3px;font-size:19.5px;color:#222;">S</div>
<div class="t" style="left:1100px;width:108.5px;text-align:right;top:777.3px;font-size:19.5px;color:#222">6</div>
<div class="t " style="left:1245.2px;top:777.3px;font-size:19.5px;color:#222;">10/29/2025 4:35:56 PM</div>
<div class="t " style="left:1498.7px;top:777.3px;font-size:19.5px;color:#222;">10/29/2025 4:43:21 PM</div>
<div class="t " style="left:1750.7px;top:777.7px;font-size:19px;color:#222;">anonymous</div>
<div class="t" style="left:1870px;width:126px;text-align:center;top:779.4px;font-size:18.2px;color:#4f4f4f;font-style:italic">null</div>
<div class="t" style="left:1996px;width:237px;text-align:center;top:779.4px;font-size:18.2px;color:#4f4f4f;font-style:italic">null</div>
<div class="t " style="left:2251.2px;top:778.6px;font-size:18px;color:#222;">Yes</div>
<div class="t " style="left:2552.2px;top:777.3px;font-size:19.5px;color:#222;">a</div>
<div class="t" style="left:1100px;width:108.5px;text-align:right;top:822.3px;font-size:19.5px;color:#222">7</div>
<div class="t " style="left:1245.2px;top:822.3px;font-size:19.5px;color:#222;">10/29/2025 4:42:05 PM</div>
<div class="t " style="left:1498.7px;top:822.3px;font-size:19.5px;color:#222;">10/29/2025 4:45:59 PM</div>
<div class="t " style="left:1750.7px;top:822.7px;font-size:19px;color:#222;">anonymous</div>
<div class="t" style="left:1870px;width:126px;text-align:center;top:824.4px;font-size:18.2px;color:#4f4f4f;font-style:italic">null</div>
<div class="t" style="left:1996px;width:237px;text-align:center;top:824.4px;font-size:18.2px;color:#4f4f4f;font-style:italic">null</div>
<div class="t " style="left:2251.2px;top:823.6px;font-size:18px;color:#222;">Yes</div>
<div class="t " style="left:2552.2px;top:822.3px;font-size:19.5px;color:#222;">L</div>
<div class="t" style="left:1100px;width:108.5px;text-align:right;top:867.3px;font-size:19.5px;color:#222">8</div>
<div class="t " style="left:1245.2px;top:867.3px;font-size:19.5px;color:#222;">10/29/2025 5:42:46 PM</div>
<div class="t " style="left:1498.7px;top:867.3px;font-size:19.5px;color:#222;">10/29/2025 5:42:55 PM</div>
<div class="t " style="left:1750.7px;top:867.7px;font-size:19px;color:#222;">anonymous</div>
<div class="t" style="left:1870px;width:126px;text-align:center;top:869.4px;font-size:18.2px;color:#4f4f4f;font-style:italic">null</div>
<div class="t" style="left:1996px;width:237px;text-align:center;top:869.4px;font-size:18.2px;color:#4f4f4f;font-style:italic">null</div>
<div class="t " style="left:2251.2px;top:868.6px;font-size:18px;color:#222;">No</div>
<div class="t" style="left:1100px;width:108.5px;text-align:right;top:912.3px;font-size:19.5px;color:#222">9</div>
<div class="t " style="left:1245.2px;top:912.3px;font-size:19.5px;color:#222;">10/29/2025 7:05:24 PM</div>
<div class="t " style="left:1498.7px;top:912.3px;font-size:19.5px;color:#222;">10/29/2025 7:07:49 PM</div>
<div class="t " style="left:1750.7px;top:912.7px;font-size:19px;color:#222;">anonymous</div>
<div class="t" style="left:1870px;width:126px;text-align:center;top:914.4px;font-size:18.2px;color:#4f4f4f;font-style:italic">null</div>
<div class="t" style="left:1996px;width:237px;text-align:center;top:914.4px;font-size:18.2px;color:#4f4f4f;font-style:italic">null</div>
<div class="t " style="left:2251.2px;top:913.6px;font-size:18px;color:#222;">Yes</div>
<div class="t " style="left:2552.2px;top:912.3px;font-size:19.5px;color:#222;">L</div>
<div class="t" style="left:1100px;width:108.5px;text-align:right;top:957.3px;font-size:19.5px;color:#222">10</div>
<div class="t " style="left:1245.2px;top:957.3px;font-size:19.5px;color:#222;">10/29/2025 10:28:26 PM</div>
<div class="t " style="left:1498.7px;top:957.3px;font-size:19.5px;color:#222;">10/29/2025 10:33:56 PM</div>
<div class="t " style="left:1750.7px;top:957.7px;font-size:19px;color:#222;">anonymous</div>
<div class="t" style="left:1870px;width:126px;text-align:center;top:959.4px;font-size:18.2px;color:#4f4f4f;font-style:italic">null</div>
<div class="t" style="left:1996px;width:237px;text-align:center;top:959.4px;font-size:18.2px;color:#4f4f4f;font-style:italic">null</div>
<div class="t " style="left:2251.2px;top:958.6px;font-size:18px;color:#222;">Yes</div>
<div class="t " style="left:2552.2px;top:957.3px;font-size:19.5px;color:#222;">A</div>
<div class="t" style="left:1100px;width:108.5px;text-align:right;top:1002.3px;font-size:19.5px;color:#222">11</div>
<div class="t " style="left:1245.2px;top:1002.3px;font-size:19.5px;color:#222;">10/29/2025 10:41:09 PM</div>
<div class="t " style="left:1498.7px;top:1002.3px;font-size:19.5px;color:#222;">10/29/2025 10:42:16 PM</div>
<div class="t " style="left:1750.7px;top:1002.7px;font-size:19px;color:#222;">anonymous</div>
<div class="t" style="left:1870px;width:126px;text-align:center;top:1004.4px;font-size:18.2px;color:#4f4f4f;font-style:italic">null</div>
<div class="t" style="left:1996px;width:237px;text-align:center;top:1004.4px;font-size:18.2px;color:#4f4f4f;font-style:italic">null</div>
<div class="t " style="left:2251.2px;top:1003.6px;font-size:18px;color:#222;">Yes</div>
<div class="t " style="left:2552.2px;top:1002.3px;font-size:19.5px;color:#222;">A</div>
<div class="t" style="left:1100px;width:108.5px;text-align:right;top:1047.3px;font-size:19.5px;color:#222">12</div>
<div class="t " style="left:1245.2px;top:1047.3px;font-size:19.5px;color:#222;">10/30/2025 2:25:39 PM</div>
<div class="t " style="left:1498.7px;top:1047.3px;font-size:19.5px;color:#222;">10/30/2025 2:26:49 PM</div>
<div class="t " style="left:1750.7px;top:1047.7px;font-size:19px;color:#222;">anonymous</div>
<div class="t" style="left:1870px;width:126px;text-align:center;top:1049.4px;font-size:18.2px;color:#4f4f4f;font-style:italic">null</div>
<div class="t" style="left:1996px;width:237px;text-align:center;top:1049.4px;font-size:18.2px;color:#4f4f4f;font-style:italic">null</div>
<div class="t " style="left:2251.2px;top:1048.6px;font-size:18px;color:#222;">Yes</div>
<div class="t " style="left:2552.2px;top:1047.3px;font-size:19.5px;color:#222;">A</div>
<div class="t" style="left:1100px;width:108.5px;text-align:right;top:1092.3px;font-size:19.5px;color:#222">13</div>
<div class="t " style="left:1245.2px;top:1092.3px;font-size:19.5px;color:#222;">10/30/2025 4:50:57 PM</div>
<div class="t " style="left:1498.7px;top:1092.3px;font-size:19.5px;color:#222;">10/30/2025 4:53:32 PM</div>
<div class="t " style="left:1750.7px;top:1092.7px;font-size:19px;color:#222;">anonymous</div>
<div class="t" style="left:1870px;width:126px;text-align:center;top:1094.4px;font-size:18.2px;color:#4f4f4f;font-style:italic">null</div>
<div class="t" style="left:1996px;width:237px;text-align:center;top:1094.4px;font-size:18.2px;color:#4f4f4f;font-style:italic">null</div>
<div class="t " style="left:2251.2px;top:1093.6px;font-size:18px;color:#222;">Yes</div>
<div class="t " style="left:2552.2px;top:1092.3px;font-size:19.5px;color:#222;">A</div>
<div class="r" style="left:1121px;top:540px;width:1438px;height:1px;background:#8c8c8c;"></div>
<div class="r" style="left:1227px;top:422px;width:1px;height:703px;background:#c8c8c8;"></div>
<div class="r" style="left:1481px;top:422px;width:1px;height:703px;background:#c8c8c8;"></div>
<div class="r" style="left:1733px;top:422px;width:1px;height:703px;background:#c8c8c8;"></div>
<div class="r" style="left:1870px;top:422px;width:1px;height:703px;background:#c8c8c8;"></div>
<div class="r" style="left:1996px;top:422px;width:1px;height:703px;background:#c8c8c8;"></div>
<div class="r" style="left:2233px;top:422px;width:1px;height:703px;background:#c8c8c8;"></div>
<div class="r" style="left:2533px;top:422px;width:1px;height:703px;background:#c8c8c8;"></div>
<div class="r" style="left:1480px;top:422px;width:1px;height:704px;background:#8a949e;"></div>
<div class="r" style="left:1732px;top:422px;width:1px;height:704px;background:#8a949e;"></div>
<svg class="s" style="left:1148px;top:442px;" width="18" height="18" viewBox="0 0 18 18"><path d="M6.5 1.5V16.5M11.5 1.5V16.5M1.5 6.2H16.5M1.5 11.2H16.5" stroke="#5a8cb3" stroke-width="1.35"/></svg>
<svg class="s" style="left:1184.5px;top:449.5px;" width="12" height="8" viewBox="0 0 12 8"><path d="M0 0H12L6.0 8Z" fill="#222"/></svg>
<div class="t " style="left:1138.7px;top:471.6px;font-size:15px;color:#555;">Sheet1</div>
<div class="t " style="left:1138.7px;top:503.7px;font-size:19.8px;color:#222;-webkit-text-stroke:0.35px #222;">ID</div>
<svg class="s" style="left:1255px;top:443px;" width="24" height="22" viewBox="0 0 24 22"><g stroke="#5a8cb3" stroke-width="1.2" fill="none"><path d="M13.5 15.5H1.5V3.5H15.5V9"/><path d="M1.5 7H15.5"/><path d="M5.5 1V5M11 1V5"/><circle cx="16.5" cy="15.5" r="5"/><path d="M16.5 12.5V15.8H19"/></g></svg>
<svg class="s" style="left:1438.5px;top:449.5px;" width="12" height="8" viewBox="0 0 12 8"><path d="M0 0H12L6.0 8Z" fill="#222"/></svg>
<div class="t " style="left:1245.2px;top:471.6px;font-size:15px;color:#555;">Sheet1</div>
<div class="t " style="left:1245.2px;top:503.6px;font-size:20px;color:#222;-webkit-text-stroke:0.35px #222;">Start time</div>
<svg class="s" style="left:1508.5px;top:443px;" width="24" height="22" viewBox="0 0 24 22"><g stroke="#5a8cb3" stroke-width="1.2" fill="none"><path d="M13.5 15.5H1.5V3.5H15.5V9"/><path d="M1.5 7H15.5"/><path d="M5.5 1V5M11 1V5"/><circle cx="16.5" cy="15.5" r="5"/><path d="M16.5 12.5V15.8H19"/></g></svg>
<svg class="s" style="left:1690.5px;top:449.5px;" width="12" height="8" viewBox="0 0 12 8"><path d="M0 0H12L6.0 8Z" fill="#222"/></svg>
<div class="t " style="left:1498.7px;top:471.6px;font-size:15px;color:#555;">Sheet1</div>
<div class="t " style="left:1498.7px;top:503.8px;font-size:19.7px;color:#222;-webkit-text-stroke:0.35px #222;">Completion time</div>
<div class="t " style="left:1757.7px;top:445.5px;font-size:14.5px;color:#5586ab;">Abc</div>
<svg class="s" style="left:1826px;top:449.5px;" width="12" height="8" viewBox="0 0 12 8"><path d="M0 0H12L6.0 8Z" fill="#222"/></svg>
<div class="t " style="left:1750.7px;top:471.6px;font-size:15px;color:#555;">Sheet1</div>
<div class="t " style="left:1750.7px;top:504.6px;font-size:18.8px;color:#222;-webkit-text-stroke:0.35px #222;">Email</div>
<div class="t " style="left:1894.2px;top:445.5px;font-size:14.5px;color:#5586ab;">Abc</div>
<svg class="s" style="left:1954px;top:449.5px;" width="12" height="8" viewBox="0 0 12 8"><path d="M0 0H12L6.0 8Z" fill="#222"/></svg>
<div class="t " style="left:1887.2px;top:471.6px;font-size:15px;color:#555;">Sheet1</div>
<div class="t " style="left:1887.2px;top:504.6px;font-size:18.8px;color:#222;-webkit-text-stroke:0.35px #222;">Name</div>
<div class="t " style="left:2021.7px;top:445.5px;font-size:14.5px;color:#5586ab;">Abc</div>
<svg class="s" style="left:2191px;top:449.5px;" width="12" height="8" viewBox="0 0 12 8"><path d="M0 0H12L6.0 8Z" fill="#222"/></svg>
<div class="t " style="left:2014.7px;top:471.6px;font-size:15px;color:#555;">Sheet1</div>
<div class="t " style="left:2014.7px;top:503.9px;font-size:19.6px;color:#222;-webkit-text-stroke:0.35px #222;">Last modified time</div>
<div class="t " style="left:2258.2px;top:445.5px;font-size:14.5px;color:#5586ab;">Abc</div>
<svg class="s" style="left:2491.5px;top:449.5px;" width="12" height="8" viewBox="0 0 12 8"><path d="M0 0H12L6.0 8Z" fill="#222"/></svg>
<div class="t " style="left:2251.2px;top:471.6px;font-size:15px;color:#555;">Sheet1</div>
<div class="t " style="left:2251.2px;top:504.7px;font-size:18.7px;color:#222;-webkit-text-stroke:0.35px #222;">Do you use any GenAI tool</div>
<div class="t " style="left:2552.2px;top:471.6px;font-size:15px;color:#555;">Sheet1</div>
<div class="t " style="left:2552.2px;top:504.4px;font-size:19px;color:#222;-webkit-text-stroke:0.35px #222;">W</div>
<div class="r" style="left:1144px;top:1268px;width:551px;height:7px;background:#dcdcdc;"></div>
<div class="r" style="left:1695px;top:1268px;width:842px;height:7px;background:#f2f2f2;"></div>
</body></html>
